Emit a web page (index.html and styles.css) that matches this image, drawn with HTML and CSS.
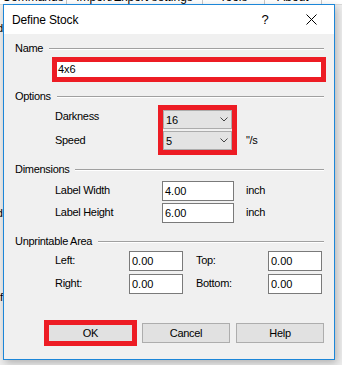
FILE: index.html
```html
<!DOCTYPE html>
<html lang="en">
<head>
    <meta charset="UTF-8">
    <meta name="viewport" content="width=device-width, initial-scale=1.0">
    <title>Define Stock</title>
    <link rel="stylesheet" href="styles.css">
</head>
<body>
    <div class="app">
        <div class="tabs">
            <div class="tab tab-commands">Commands</div>
            <div class="tab tab-import">Import/Export settings</div>
            <div class="tab tab-tools">Tools</div>
            <div class="tab tab-about">About</div>
        </div>
        <div class="side">
            <div class="side-item first">Field</div>
            <div class="side-item second">Word</div>
            <div class="side-item third">Pdf</div>
        </div>
    </div>

    <div class="dialog">
        <div class="titlebar">
            <span class="title">Define Stock</span>
            <span class="title-btn help-btn">?</span>
            <span class="title-btn close-btn">
                <svg width="11" height="11" viewBox="0 0 11 11"><path d="M0.5 0.5 L10.5 10.5 M10.5 0.5 L0.5 10.5" stroke="#000" stroke-width="1" fill="none"/></svg>
            </span>
        </div>

        <div class="body">
            <div class="group-head"><span>Name</span><div class="rule"></div></div>
            <div class="mark name-box">
                <div class="name-input">4x6</div>
            </div>

            <div class="group-head gap-8"><span>Options</span><div class="rule"></div></div>
            <div class="options">
                <div class="opt-labels">
                    <div>Darkness</div>
                    <div class="opt-speed">Speed</div>
                </div>
                <div class="mark combo-box">
                    <div class="combo">16<svg width="8" height="5" viewBox="0 0 8 5"><polyline points="0.5,0.5 4,4 7.5,0.5" stroke="#444" fill="none"/></svg></div>
                    <div class="combo">5<svg width="8" height="5" viewBox="0 0 8 5"><polyline points="0.5,0.5 4,4 7.5,0.5" stroke="#444" fill="none"/></svg></div>
                </div>
                <div class="opt-unit">"/s</div>
            </div>

            <div class="group-head gap-8"><span>Dimensions</span><div class="rule"></div></div>
            <div class="dims">
                <div class="row">
                    <div class="lbl lbl-dim">Label Width</div>
                    <div class="field field-dim">4.00</div>
                    <div class="lbl unit">inch</div>
                </div>
                <div class="row">
                    <div class="lbl lbl-dim">Label Height</div>
                    <div class="field field-dim">6.00</div>
                    <div class="lbl unit">inch</div>
                </div>
            </div>

            <div class="group-head gap-12"><span>Unprintable Area</span><div class="rule"></div></div>
            <div class="margins">
                <div class="row">
                    <div class="lbl lbl-left">Left:</div>
                    <div class="field field-small">0.00</div>
                    <div class="lbl lbl-right">Top:</div>
                    <div class="field field-small">0.00</div>
                </div>
                <div class="row">
                    <div class="lbl lbl-left">Right:</div>
                    <div class="field field-small">0.00</div>
                    <div class="lbl lbl-right">Bottom:</div>
                    <div class="field field-small">0.00</div>
                </div>
            </div>

            <div class="buttons">
                <div class="mark ok-box"><div class="btn btn-ok">OK</div></div>
                <div class="btn btn-cancel">Cancel</div>
                <div class="btn btn-help">Help</div>
            </div>
        </div>
    </div>
</body>
</html>
```

FILE: styles.css
```css
body {
    margin: 0;
    background: #eeeeee;
    font-family: "Liberation Sans", Arial, sans-serif;
    font-size: 11px;
    color: #000;
    overflow: hidden;
}
.app {
    height: 365px;
}
.tabs {
    display: flex;
    height: 14px;
    margin-top: -10px;
    background: #fff;
    border-bottom: 1px solid #d9d9d9;
}
.tab {
    font-size: 12px;
    line-height: 14px;
    text-align: center;
    border-right: 1px solid #c8c8c8;
    white-space: nowrap;
    overflow: hidden;
}
.tab-commands { width: 66px; }
.tab-import { width: 135px; }
.tab-tools { width: 61px; }
.tab-about { width: 56px; }
.side {
    width: 3px;
    overflow: hidden;
}
.side-item {
    display: flex;
    justify-content: flex-end;
    white-space: nowrap;
    line-height: 13px;
}
.side-item.first { margin-top: 17px; }
.side-item.second { margin-top: 172px; }
.side-item.third { margin-top: 71px; }

.dialog {
    position: absolute;
    left: 3px;
    top: 4px;
    width: 332px;
    height: 356px;
    box-sizing: border-box;
    border: 1px solid #1c86d8;
    background: #f0f0f0;
    display: flex;
    flex-direction: column;
    box-shadow: 2px 3px 8px rgba(0, 0, 0, 0.25);
}
.titlebar {
    height: 29px;
    background: #fff;
    display: flex;
    align-items: center;
    flex-shrink: 0;
}
.title {
    font-size: 12px;
    padding-left: 8px;
    letter-spacing: -0.15px;
    flex: 1;
}
.title-btn {
    width: 46px;
    height: 29px;
    display: flex;
    align-items: center;
    justify-content: center;
}
.help-btn {
    font-size: 13px;
}
.body {
    flex: 1;
    padding: 8px 10px 0 11px;
    letter-spacing: -0.3px;
}
.group-head {
    display: flex;
    align-items: center;
    height: 13px;
    line-height: 13px;
}
.gap-8 { margin-top: 8px; }
.gap-12 { margin-top: 12px; }
.rule {
    flex: 1;
    margin-left: 6px;
    border-top: 1px solid #a0a0a0;
    border-bottom: 1px solid #fff;
}
.mark {
    border: 5px solid #ed1c24;
}
.name-box {
    margin: 2px 0 0 37px;
    width: 264px;
    height: 15px;
}
.name-input {
    height: 15px;
    line-height: 15px;
    background: #fff;
    padding-left: 1px;
    letter-spacing: 0;
}
.options {
    display: flex;
    margin: 2px 0 0 40px;
}
.opt-labels {
    width: 103px;
    padding-top: 5px;
    line-height: 13px;
}
.opt-speed {
    margin-top: 11px;
}
.combo-box {
    width: 69px;
    height: 40px;
    display: flex;
    flex-direction: column;
    gap: 2px;
}
.combo {
    height: 19px;
    box-sizing: border-box;
    border: 1px solid #acacac;
    background: #e3e3e3;
    display: flex;
    align-items: center;
    justify-content: space-between;
    padding: 0 3px 0 2px;
    letter-spacing: 0;
}
.opt-unit {
    margin-left: 9px;
    padding-top: 29px;
    line-height: 13px;
}
.dims {
    margin: 5px 0 0 40px;
    display: flex;
    flex-direction: column;
    gap: 2px;
}
.margins {
    margin: 3px 0 0 40px;
    display: flex;
    flex-direction: column;
    gap: 3px;
}
.row {
    display: flex;
    align-items: flex-start;
}
.lbl {
    padding-top: 3px;
    line-height: 13px;
}
.lbl-dim { width: 107px; }
.unit { margin-left: 12px; }
.lbl-left { width: 74px; }
.lbl-right { width: 72px; margin-left: 13px; }
.field {
    height: 20px;
    box-sizing: border-box;
    border: 1px solid #7a7a7a;
    background: #fff;
    line-height: 18px;
    padding-left: 2px;
    letter-spacing: 0;
}
.field-dim { width: 72px; }
.field-small { width: 54px; }
.buttons {
    display: flex;
    align-items: center;
    margin: 26px 0 0 29px;
}
.ok-box {
    width: 83px;
    height: 16px;
}
.btn {
    height: 20px;
    box-sizing: border-box;
    border: 1px solid #adadad;
    background: #e1e1e1;
    display: flex;
    align-items: center;
    justify-content: center;
}
.btn-ok {
    height: 16px;
    border: none;
}
.btn-cancel {
    width: 88px;
    margin-left: 5px;
}
.btn-help {
    width: 88px;
    margin-left: 6px;
}
```
